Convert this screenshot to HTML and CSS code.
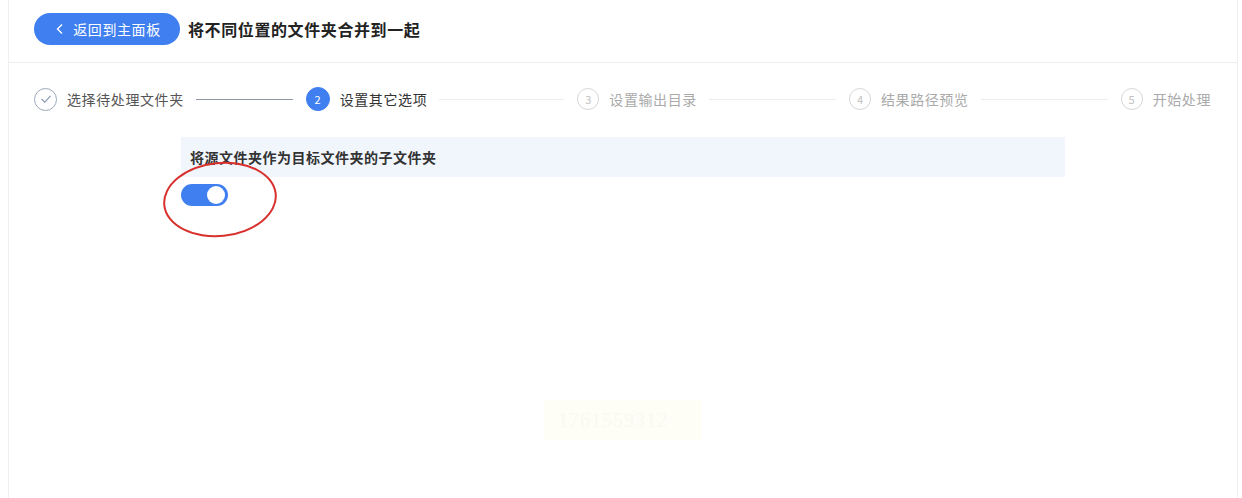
FILE: index.html
```html
<!DOCTYPE html>
<html>
<head>
    <meta charset="utf-8">
    <title>合并文件夹</title>
    <link rel="stylesheet" href="styles.css">
</head>
<body>
    <div class="panel">
        <div class="header">
            <button class="back">
                <svg width="10" height="12" viewBox="0 0 10 12"><path d="M7 1.5 L2.5 6 L7 10.5" fill="none" stroke="#fff" stroke-width="1.4"/></svg>
                返回到主面板
            </button>
            <h1>将不同位置的文件夹合并到一起</h1>
        </div>

        <div class="steps">
            <div class="step done">
                <span class="dot">
                    <svg width="12" height="10" viewBox="0 0 12 10"><path d="M1.5 5 L4.8 8.2 L10.5 1.8" fill="none" stroke="#8a9bb0" stroke-width="1.2"/></svg>
                </span>
                <span class="label">选择待处理文件夹</span>
                <span class="line dark"></span>
            </div>
            <div class="step active">
                <span class="dot">2</span>
                <span class="label">设置其它选项</span>
                <span class="line"></span>
            </div>
            <div class="step">
                <span class="dot">3</span>
                <span class="label">设置输出目录</span>
                <span class="line"></span>
            </div>
            <div class="step">
                <span class="dot">4</span>
                <span class="label">结果路径预览</span>
                <span class="line"></span>
            </div>
            <div class="step last">
                <span class="dot">5</span>
                <span class="label">开始处理</span>
            </div>
        </div>

        <div class="content">
            <div class="option">将源文件夹作为目标文件夹的子文件夹</div>
            <div class="switch on"><span class="knob"></span></div>
            <div class="mark"></div>
        </div>

        <div class="stamp"><span>1761559312</span></div>
    </div>
</body>
</html>
```
FILE: styles.css
```css
body {
    margin: 0;
    background-color: #fff;
    font-family: "Noto Sans CJK SC", "Noto Sans", sans-serif;
    color: #333;
}

.panel {
    margin: 0 4px 0 8px;
    height: 498px;
    border-left: 1px solid #f0f0f0;
    border-right: 1px solid #f0f0f0;
    box-sizing: border-box;
}

.header {
    height: 63px;
    display: flex;
    align-items: center;
    gap: 8px;
    padding-left: 25px;
    padding-bottom: 5px;
    box-sizing: border-box;
    border-bottom: 1px solid #eeeeee;
}

.back {
    width: 146px;
    height: 32px;
    border: none;
    border-radius: 16px;
    background-color: #3f7ff0;
    color: #fff;
    font-family: inherit;
    font-size: 14px;
    letter-spacing: 0.6px;
    display: flex;
    align-items: center;
    justify-content: center;
    gap: 8px;
    padding: 0 0 0 2px;
}

.header h1 {
    margin: 0;
    font-size: 16px;
    letter-spacing: 0.6px;
    font-weight: bold;
    color: #222;
}

.steps {
    display: flex;
    align-items: center;
    padding: 0 26px 0 25px;
    height: 72px;
}

.step {
    flex: 1;
    display: flex;
    align-items: center;
    font-size: 14px;
    letter-spacing: 0.6px;
    color: #aaaaaa;
}

.step.last {
    flex: none;
}

.label {
    margin-left: 10px;
    white-space: nowrap;
}

.dot {
    flex: none;
    width: 22px;
    height: 22px;
    border-radius: 50%;
    border: 1px solid #d8d8d8;
    box-sizing: border-box;
    display: flex;
    align-items: center;
    justify-content: center;
    font-size: 11px;
    letter-spacing: 0;
    color: #c0c0c0;
}

.step.done {
    color: #555;
}

.step.done .dot {
    border-color: #9aa8b8;
    width: 23px;
    height: 23px;
}

.step.active {
    color: #333;
}

.step.active .dot {
    background-color: #3f7ff0;
    border-color: #3f7ff0;
    color: #fff;
    width: 24px;
    height: 24px;
}

.line {
    flex: 1;
    height: 1px;
    background-color: #ececec;
    margin: 0 13px 0 12px;
}

.line.dark {
    background-color: #8e98a4;
}

.content {
    position: relative;
    padding: 2px 0 0 172px;
}

.option {
    width: 884px;
    height: 40px;
    box-sizing: border-box;
    padding: 0 9px;
    display: flex;
    align-items: center;
    background-color: #f1f6fd;
    font-size: 14px;
    letter-spacing: 0.5px;
    font-weight: bold;
    color: #333;
}

.switch {
    margin-top: 7px;
    width: 47px;
    height: 22px;
    border-radius: 11px;
    background-color: #3f7ff0;
    display: flex;
    align-items: center;
    justify-content: flex-end;
    padding: 0 3px;
    box-sizing: border-box;
}

.knob {
    width: 18px;
    height: 18px;
    border-radius: 50%;
    background-color: #fff;
}

/* red ellipse drawn over the switch */
.mark {
    position: absolute;
    left: 154px;
    top: 27px;
    width: 110px;
    height: 71px;
    border: 2px solid #d8302c;
    border-radius: 50%;
    transform: rotate(-6deg);
}

.stamp {
    margin: 194px 0 0 535px;
    width: 157px;
    height: 40px;
    background-color: #fefef7;
    display: flex;
    align-items: center;
    padding-left: 14px;
    box-sizing: border-box;
}

.stamp span {
    font-family: "Liberation Serif", serif;
    font-size: 20px;
    color: #f9f9f0;
    letter-spacing: 1px;
}
```
